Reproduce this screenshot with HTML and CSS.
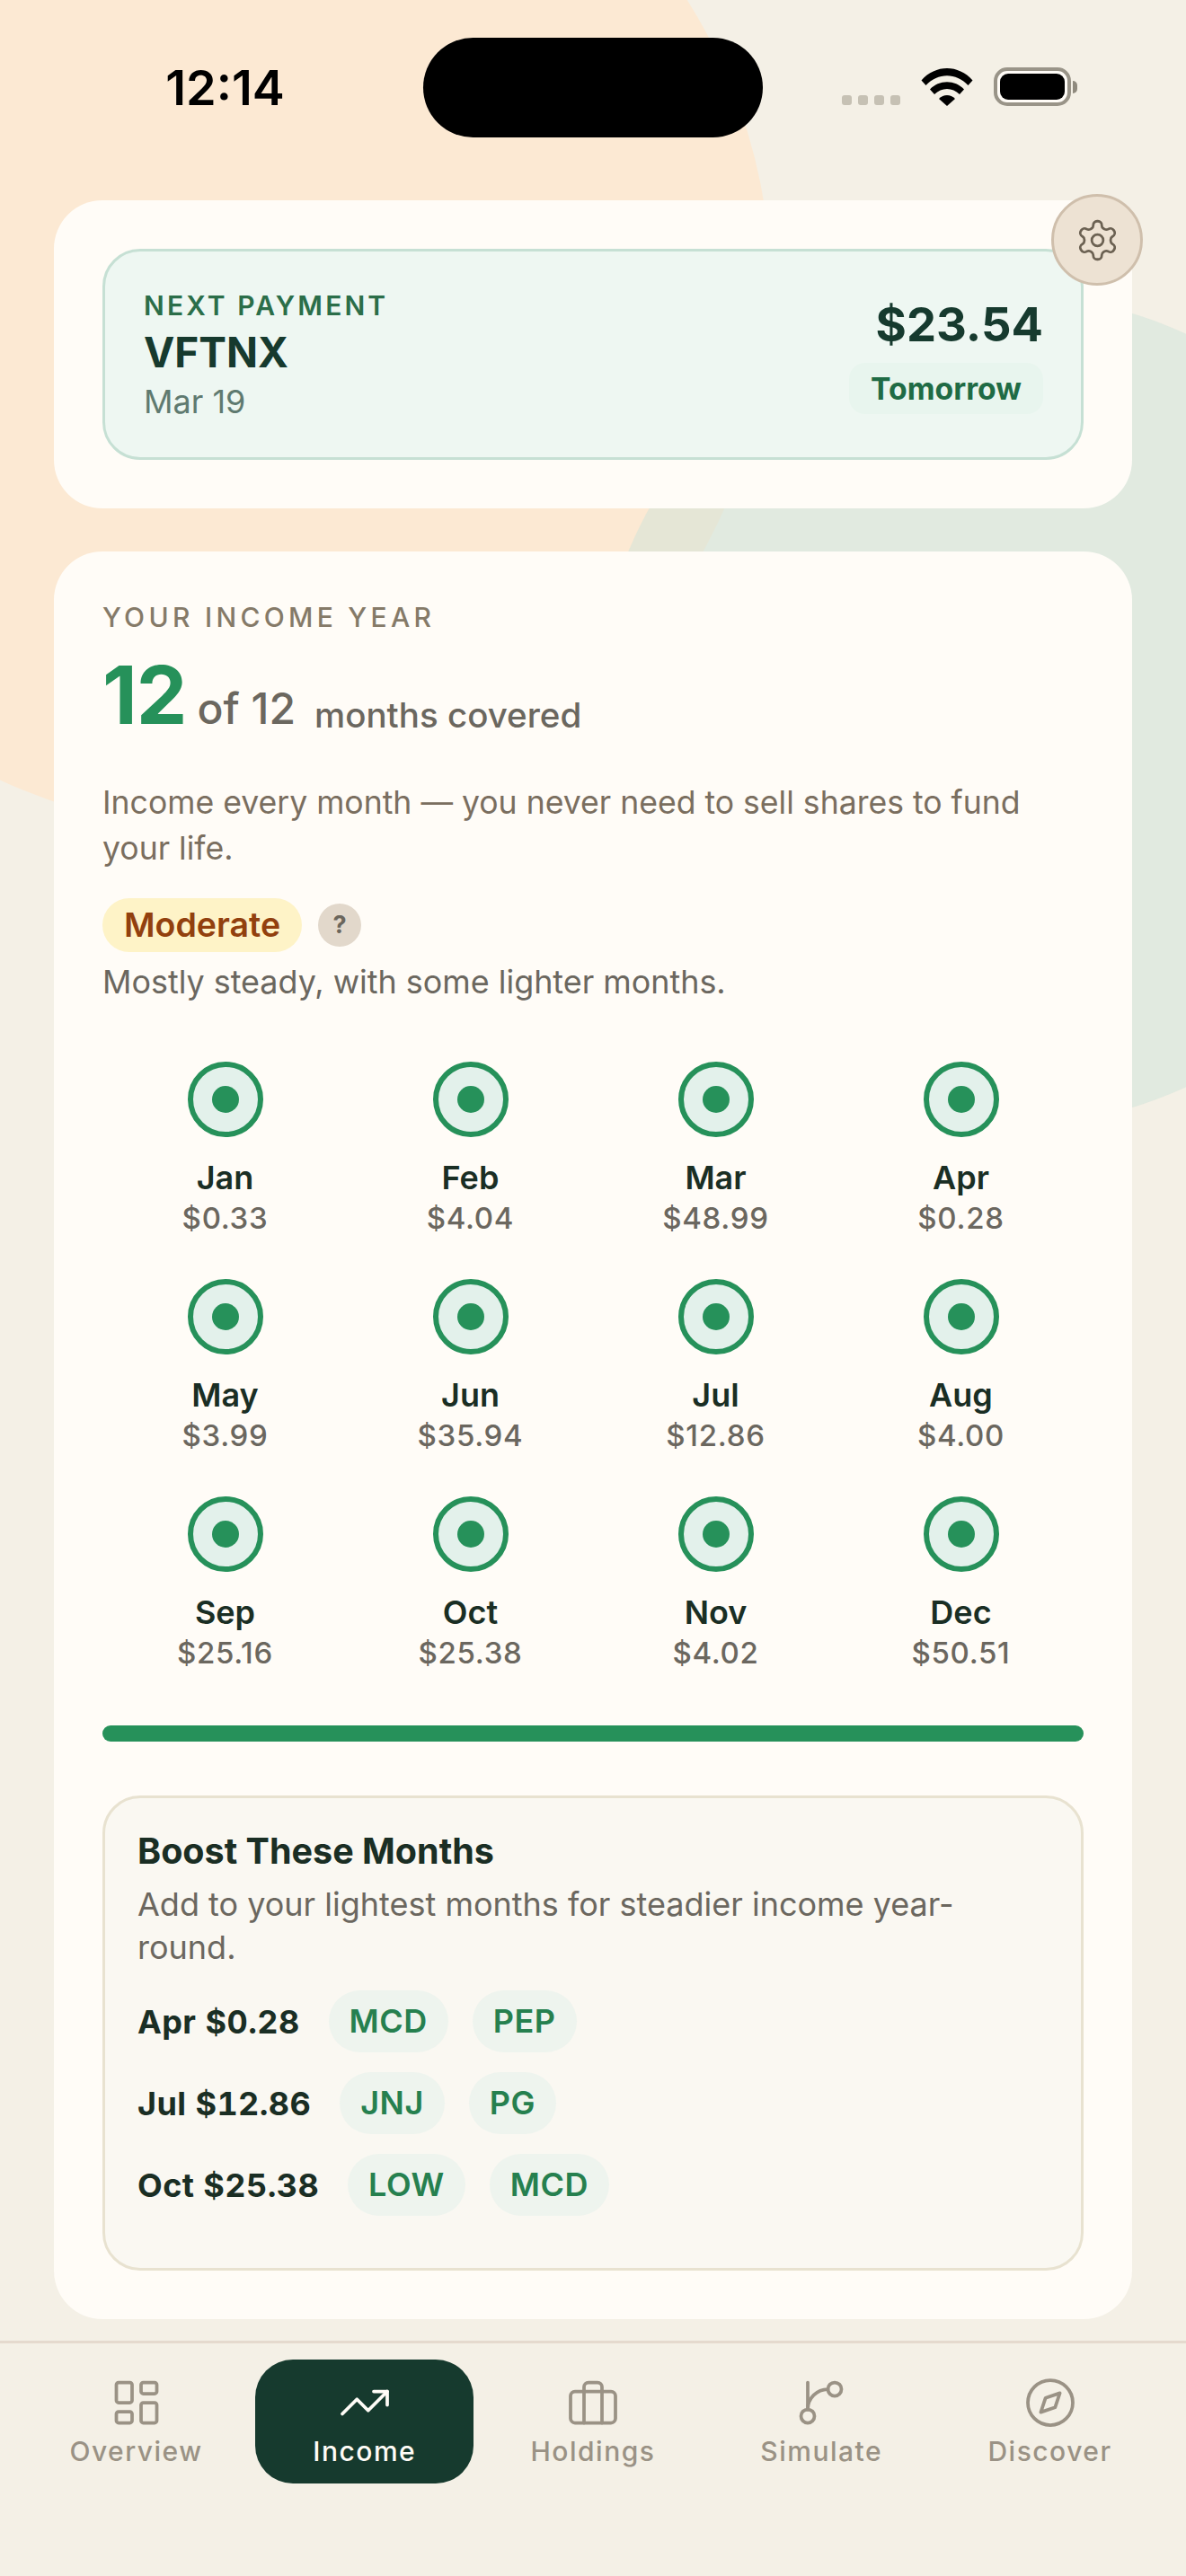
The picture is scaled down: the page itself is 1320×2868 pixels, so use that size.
FILE: index.html
```html
<!DOCTYPE html>
<html lang="en">
<head>
<meta charset="utf-8">
<title>Income</title>
<link rel="stylesheet" href="styles.css">
</head>
<body>
<div class="screen">
  <svg class="backdrop" width="1320" height="2868" viewBox="0 0 1320 2868" aria-hidden="true">
    <circle class="blob-peach" cx="255" cy="322" r="603"/>
    <circle class="blob-green" cx="1126" cy="791" r="462"/>
  </svg>

  <header class="status">
    <div class="time">12:14</div>
    <div class="island"></div>
    <div class="status-icons">
      <div class="signal"><i></i><i></i><i></i><i></i></div>
      <svg class="wifi" width="58" height="43" viewBox="0 0 58 43">
        <path d="M0.5 14.5 C16 -3.5 42 -3.5 57.5 14.5 L52.5 20 C39 5.5 19 5.5 5.500 20 Z"/>
        <path d="M10 24.500 C20 13.500 38 13.500 48 24.500 L43 30 C35 22 23 22 15 30 Z"/>
        <path d="M20 35 C25 29.500 33 29.500 38 35 L29 43 Z"/>
      </svg>
      <div class="battery"><div class="battery-body"><div class="battery-fill"></div></div><div class="battery-nub"></div></div>
    </div>
  </header>

  <main class="content">
    <section class="card card-next">
      <div class="next">
        <div class="next-left">
          <div class="next-label">NEXT PAYMENT</div>
          <div class="next-ticker">VFTNX</div>
          <div class="next-date">Mar 19</div>
        </div>
        <div class="next-right">
          <div class="next-amount">$23.54</div>
          <div class="next-when">Tomorrow</div>
        </div>
      </div>
      <button class="gear" type="button" aria-label="Settings">
        <svg width="51" height="51" viewBox="0 0 24 24" fill="none" stroke="currentColor" stroke-width="1.3" stroke-linecap="round" stroke-linejoin="round"><path d="M12.220 2h-.44a2 2 0 0 0-2 2v.18a2 2 0 0 1-1 1.730l-.43.25a2 2 0 0 1-2 0l-.15-.08a2 2 0 0 0-2.730.73l-.22.38a2 2 0 0 0 .73 2.730l.15.1a2 2 0 0 1 1 1.720v.51a2 2 0 0 1-1 1.740l-.15.09a2 2 0 0 0-.73 2.730l.22.38a2 2 0 0 0 2.730.73l.15-.08a2 2 0 0 1 2 0l.43.25a2 2 0 0 1 1 1.730V20a2 2 0 0 0 2 2h.44a2 2 0 0 0 2-2v-.18a2 2 0 0 1 1-1.730l.43-.25a2 2 0 0 1 2 0l.15.08a2 2 0 0 0 2.730-.73l.22-.39a2 2 0 0 0-.73-2.730l-.15-.08a2 2 0 0 1-1-1.740v-.5a2 2 0 0 1 1-1.740l.15-.09a2 2 0 0 0 .73-2.730l-.22-.38a2 2 0 0 0-2.730-.73l-.15.08a2 2 0 0 1-2 0l-.43-.25a2 2 0 0 1-1-1.730V4a2 2 0 0 0-2-2z"/><circle cx="12" cy="12" r="3"/></svg>
      </button>
    </section>

    <section class="card card-year">
      <div class="eyebrow">YOUR INCOME YEAR</div>
      <div class="hero">
        <div class="hero-num">12<span class="hero-of">of 12</span></div>
        <div class="hero-text">months covered</div>
      </div>
      <p class="desc">Income every month — you never need to sell shares to fund your life.</p>
      <div class="badge-row">
        <span class="badge">Moderate</span>
        <span class="help">?</span>
      </div>
      <p class="steady">Mostly steady, with some lighter months.</p>

      <div class="months">
        <div class="month"><div class="ring"><i></i></div><div class="m-name">Jan</div><div class="m-val">$0.33</div></div>
        <div class="month"><div class="ring"><i></i></div><div class="m-name">Feb</div><div class="m-val">$4.04</div></div>
        <div class="month"><div class="ring"><i></i></div><div class="m-name">Mar</div><div class="m-val">$48.99</div></div>
        <div class="month"><div class="ring"><i></i></div><div class="m-name">Apr</div><div class="m-val">$0.28</div></div>
        <div class="month"><div class="ring"><i></i></div><div class="m-name">May</div><div class="m-val">$3.99</div></div>
        <div class="month"><div class="ring"><i></i></div><div class="m-name">Jun</div><div class="m-val">$35.94</div></div>
        <div class="month"><div class="ring"><i></i></div><div class="m-name">Jul</div><div class="m-val">$12.86</div></div>
        <div class="month"><div class="ring"><i></i></div><div class="m-name">Aug</div><div class="m-val">$4.00</div></div>
        <div class="month"><div class="ring"><i></i></div><div class="m-name">Sep</div><div class="m-val">$25.16</div></div>
        <div class="month"><div class="ring"><i></i></div><div class="m-name">Oct</div><div class="m-val">$25.38</div></div>
        <div class="month"><div class="ring"><i></i></div><div class="m-name">Nov</div><div class="m-val">$4.02</div></div>
        <div class="month"><div class="ring"><i></i></div><div class="m-name">Dec</div><div class="m-val">$50.51</div></div>
      </div>

      <div class="bar"></div>

      <div class="boost">
        <div class="boost-title">Boost These Months</div>
        <p class="boost-sub">Add to your lightest months for steadier income year-round.</p>
        <div class="boost-rows">
          <div class="boost-row"><span class="boost-month">Apr $0.28</span><span class="chip">MCD</span><span class="chip">PEP</span></div>
          <div class="boost-row"><span class="boost-month">Jul $12.86</span><span class="chip">JNJ</span><span class="chip">PG</span></div>
          <div class="boost-row"><span class="boost-month">Oct $25.38</span><span class="chip">LOW</span><span class="chip">MCD</span></div>
        </div>
      </div>
    </section>
  </main>

  <nav class="tabs">
    <div class="tab">
      <svg width="60" height="60" viewBox="0 0 24 24"><rect x="3" y="3" width="7" height="9" rx="1"/><rect x="14" y="3" width="7" height="5" rx="1"/><rect x="14" y="12" width="7" height="9" rx="1"/><rect x="3" y="16" width="7" height="5" rx="1"/></svg>
      <span>Overview</span>
    </div>
    <div class="tab tab-active">
      <svg width="60" height="60" viewBox="0 0 24 24"><polyline points="22 7 13.500 15.500 8.500 10.500 2 17"/><polyline points="16 7 22 7 22 13"/></svg>
      <span>Income</span>
    </div>
    <div class="tab">
      <svg width="60" height="60" viewBox="0 0 24 24"><rect x="2" y="7" width="20" height="14" rx="2"/><path d="M16 21V5a2 2 0 0 0-2-2h-4a2 2 0 0 0-2 2v16"/></svg>
      <span>Holdings</span>
    </div>
    <div class="tab">
      <svg width="60" height="60" viewBox="0 0 24 24"><line x1="6" y1="3" x2="6" y2="15"/><circle cx="18" cy="6" r="3"/><circle cx="6" cy="18" r="3"/><path d="M15 6a9 9 0 0 0-9 9"/></svg>
      <span>Simulate</span>
    </div>
    <div class="tab">
      <svg width="60" height="60" viewBox="0 0 24 24"><circle cx="12" cy="12" r="10"/><polygon points="16.240 7.760 14.120 14.120 7.760 16.240 9.880 9.880"/></svg>
      <span>Discover</span>
    </div>
  </nav>
</div>
</body>
</html>
```
FILE: styles.css
```css
* { box-sizing: border-box; }
html, body { margin: 0; padding: 0; }
body { font-family: Inter, "Noto Sans", sans-serif; background: #f4f0e6; color: #1a2e24; }
p { margin: 0; }

.screen { position: relative; width: 1320px; height: 2868px; overflow: hidden; background: #f4f0e6; display: flex; flex-direction: column; }
.backdrop { position: absolute; left: 0; top: 0; }
.blob-peach { fill: #fce9d3; }
.blob-green { fill: rgba(206, 228, 218, 0.5); }

.status { position: relative; display: grid; grid-template-columns: 471px 378px 1fr; height: 223px; padding-top: 42px; align-items: start; }
.time { font-size: 54px; font-weight: 600; line-height: 111px; color: #000; text-align: center; padding-left: 30px; }
.island { height: 111px; background: #000; border-radius: 56px; }
.status-icons { display: flex; align-items: flex-start; padding: 33px 0 0 88px; }
.signal { display: flex; gap: 7px; margin-top: 31px; }
.signal i { width: 11px; height: 11px; border-radius: 3px; background: #c6c1b4; }
.wifi { margin-left: 23px; fill: #000; }
.battery { display: flex; align-items: center; margin-left: 23px; }
.battery-body { width: 86px; height: 43px; border: 4px solid #999488; border-radius: 15px; background: #fffcf7; padding: 3px; }
.battery-fill { width: 100%; height: 100%; background: #000; border-radius: 9px; }
.battery-nub { width: 5px; height: 14px; background: #8f8a7e; border-radius: 0 7px 7px 0; margin-left: 2px; }

.content { position: relative; flex: 1; padding: 0 60px; display: flex; flex-direction: column; gap: 48px; }
.card { position: relative; background: #fffcf7; border-radius: 54px; padding: 54px; }

.next { height: 235px; border: 3px solid #c6e0d4; border-radius: 42px; background: #eef7f2; padding: 0 42px 0 43px; display: flex; justify-content: space-between; align-items: center; }
.next-label { font-size: 30px; line-height: 36px; font-weight: 600; letter-spacing: 3.1px; color: #2b6e49; margin-top: 4px; }
.next-ticker { font-size: 46px; line-height: 54px; font-weight: 700; color: #163a2e; margin-top: 7px; }
.next-date { font-size: 36px; line-height: 48px; color: #5f7a70; margin-top: 4px; }
.next-right { display: flex; flex-direction: column; align-items: flex-end; }
.next-amount { font-size: 52.5px; line-height: 60px; font-weight: 700; color: #163a2e; margin-top: 2px; }
.next-when { margin-top: 13px; height: 57px; padding: 0 24px; background: #e8f5ee; border-radius: 18px; font-size: 33.75px; line-height: 57px; font-weight: 700; color: #1f6b45; }
.gear { position: absolute; right: -12px; top: -7px; width: 102px; height: 102px; padding: 0; border: 3px solid #cfbfac; border-radius: 50%; background: #ede2d3; color: #6b6152; display: flex; align-items: center; justify-content: center; }

.eyebrow { font-size: 30px; line-height: 36px; font-weight: 500; letter-spacing: 4.3px; color: #857a68; margin-top: 1px; }
.hero { display: flex; align-items: flex-end; margin-top: 27px; }
.hero-num { font-size: 90px; line-height: 84px; font-weight: 700; color: #26915a; letter-spacing: -1px; }
.hero-of { font-size: 48px; line-height: 48px; font-weight: 500; color: #6b675f; margin-left: 12px; letter-spacing: 0; }
.hero-text { font-size: 38.5px; line-height: 39px; font-weight: 500; color: #6b675f; margin: 0 0 0 21px; }
.desc { margin-top: 52px; font-size: 35.6px; line-height: 51px; color: #7a6e5f; }
.badge-row { display: flex; align-items: center; gap: 18px; margin-top: 30px; }
.badge { height: 60px; padding: 0 24px; background: #fef3c7; border-radius: 30px; font-size: 37.5px; line-height: 60px; font-weight: 600; color: #92400e; }
.help { width: 48px; height: 48px; border-radius: 50%; background: #e2d8cb; font-size: 27px; line-height: 48px; font-weight: 700; text-align: center; color: #6b665c; }
.steady { margin-top: 8px; font-size: 35.9px; line-height: 51px; color: #6b675f; }

.months { margin-top: 63px; display: grid; grid-template-columns: repeat(4, 1fr); row-gap: 47px; }
.month { display: flex; flex-direction: column; align-items: center; }
.ring { width: 84px; height: 84px; border: 6px solid #26915a; border-radius: 50%; background: #e3f1eb; display: flex; align-items: center; justify-content: center; margin-bottom: 22px; }
.ring i { width: 30px; height: 30px; border-radius: 50%; background: #26915a; }
.m-name { font-size: 36px; line-height: 47px; font-weight: 600; color: #1a2e24; }
.m-val { font-size: 33px; line-height: 42px; font-weight: 500; letter-spacing: 0.7px; color: #6b675f; }

.bar { margin-top: 60px; height: 18px; border-radius: 9px; background: #26915a; }

.boost { margin-top: 60px; border: 3px solid #e8e2d0; border-radius: 42px; background: #faf8f2; padding: 35px 54px 58px 36px; }
.boost-title { font-size: 39.5px; line-height: 48px; font-weight: 650; color: #1a2e24; }
.boost-sub { margin-top: 11px; font-size: 36px; line-height: 48px; color: #6b675f; }
.boost-rows { margin-top: 24px; display: flex; flex-direction: column; gap: 22px; }
.boost-row { display: flex; align-items: center; gap: 27px; }
.boost-month { font-size: 36px; font-weight: 700; font-variant-numeric: tabular-nums; letter-spacing: 0.4px; color: #1a2e24; margin-right: 5px; }
.chip { height: 69px; padding: 0 23px; border-radius: 35px; background: #eef4ee; font-size: 36px; line-height: 69px; font-weight: 600; letter-spacing: 0.5px; color: #26804f; }

.tabs { position: relative; height: 262px; border-top: 3px solid #e5dace; padding: 18px 30px 0; display: grid; grid-template-columns: repeat(5, 1fr); column-gap: 11.25px; align-items: start; }
.tab { height: 138px; border-radius: 42px; display: flex; flex-direction: column; align-items: center; padding-top: 18px; font-size: 30px; line-height: 36px; font-weight: 500; letter-spacing: 1.5px; color: #9a9285; }
.tab svg { display: block; fill: none; stroke: currentColor; stroke-width: 1.5; stroke-linecap: round; stroke-linejoin: round; margin-bottom: 6px; }
.tab-active { background: #163a2e; color: #fffcf7; }
```
